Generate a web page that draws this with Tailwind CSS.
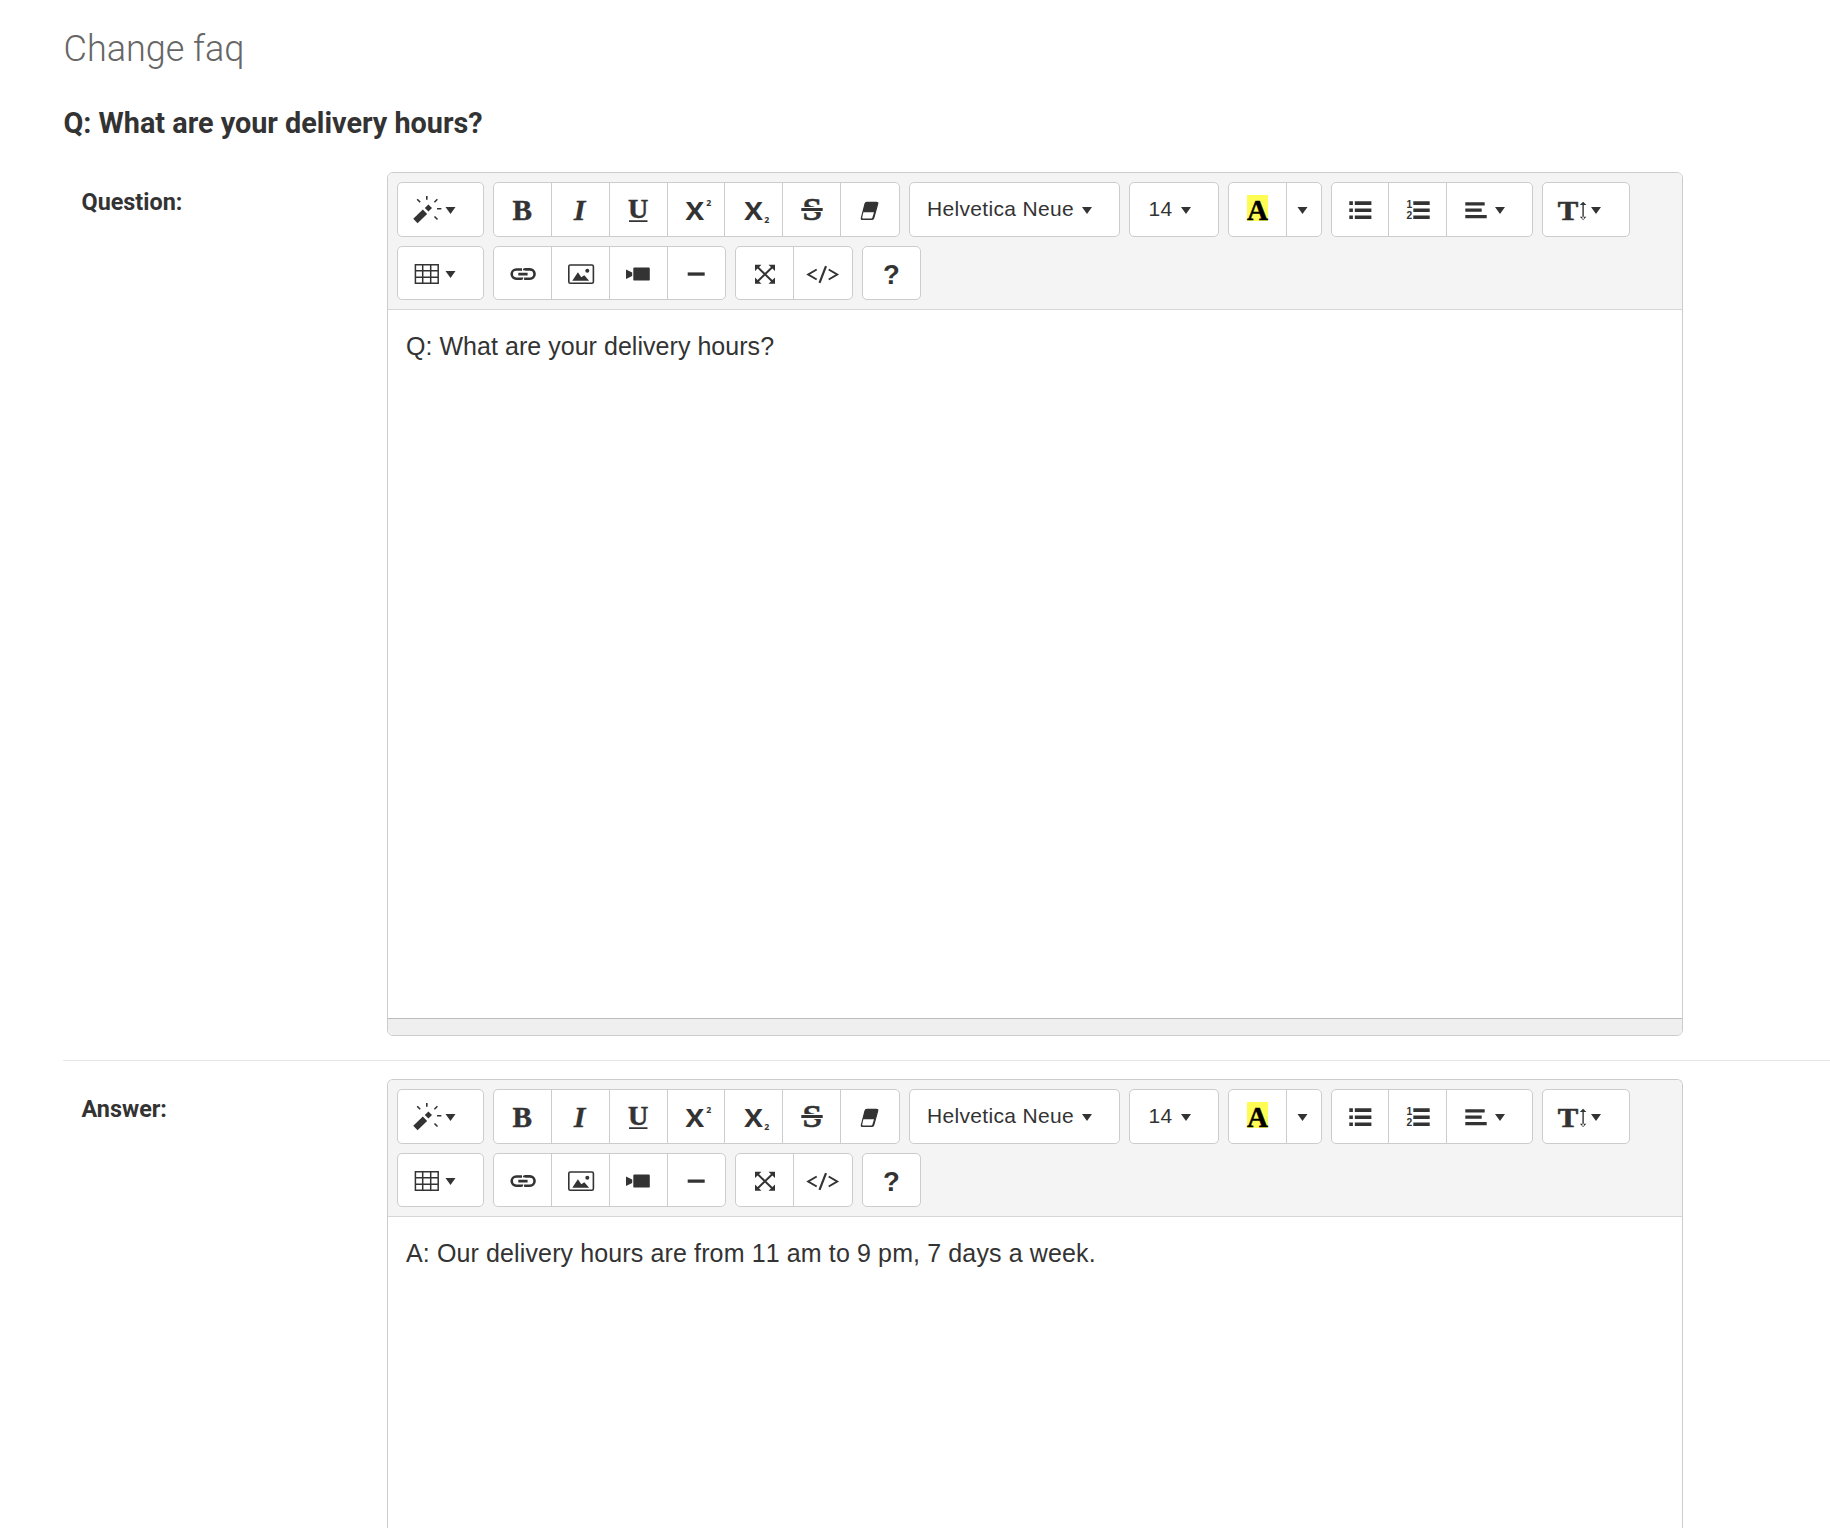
<!DOCTYPE html>
<html lang="en">
<head>
<meta charset="utf-8">
<title>Change faq</title>
<script src="https://cdn.jsdelivr.net/npm/@tailwindcss/browser@4"></script>
</head>
<body class="bg-white text-[#333] overflow-hidden h-[1528px] font-['Roboto',sans-serif]">
<template id="toolbar">
  <div class="flex h-[137px] flex-col gap-[9px] border-b border-[#d6d6d6] bg-[#f4f4f4] px-[9px] pt-[9px]">
    <div class="flex h-[55px] gap-[9px]">
      <div class="flex w-[87px] rounded-[5px] border border-[#ccc] bg-white">
        <svg class="h-[53px] w-[85px]" viewBox="398 183 85 53" fill="#333" stroke="#333" stroke-width="0"><path d="M415.4 221L425 211.8" stroke-width="6.2"/><path d="M428.4 204.4l3.6 3.6-3.6 3.6-3.6-3.6z"/><path d="M426.8 196v3.8M417.2 199.2l3 3.1M437.4 199.3l-3 3M437 208.8h4.4M434.5 216.5l3 3" stroke-width="1.6"/><path d="M445.5 207h10l-5 7z"/></svg>
      </div>
      <div class="flex w-[407px] divide-x divide-[#ccc] rounded-[5px] border border-[#ccc] bg-white">
        <svg class="h-[53px] w-[58px]" viewBox="494 183 57 53" fill="#333"><text x="512.5" y="219.7" font-family="Liberation Serif" font-weight="bold" font-size="30" stroke="#333" stroke-width=".5" textLength="19.5" lengthAdjust="spacingAndGlyphs">B</text></svg>
        <svg class="h-[53px] w-[58px]" viewBox="552 183 57 53" fill="#333"><text x="573.8" y="219.7" font-family="Liberation Serif" font-weight="bold" font-style="italic" font-size="30" stroke="#333" stroke-width=".3">I</text></svg>
        <svg class="h-[53px] w-[58px]" viewBox="610 183 57 53" fill="#333"><text x="628" y="218.3" font-family="Liberation Serif" font-weight="bold" font-size="26.5" stroke="#333" stroke-width=".5" textLength="20.3" lengthAdjust="spacingAndGlyphs">U</text><path d="M629 220.2h18.5v1.7h-18.5z"/></svg>
        <svg class="h-[53px] w-[57px]" viewBox="668 183 56 53" fill="#333"><text x="685.5" y="220" font-family="Open Sans" font-weight="bold" font-size="25.6" textLength="18.6" lengthAdjust="spacingAndGlyphs">X</text><text x="706.2" y="206" font-family="Open Sans" font-weight="bold" font-size="8.8">2</text></svg>
        <svg class="h-[53px] w-[58px]" viewBox="725 183 57 53" fill="#333"><text x="744.2" y="220" font-family="Open Sans" font-weight="bold" font-size="25.6" textLength="18.6" lengthAdjust="spacingAndGlyphs">X</text><text x="764.3" y="222.7" font-family="Open Sans" font-weight="bold" font-size="8.8">2</text></svg>
        <svg class="h-[53px] w-[58px]" viewBox="783 183 57 53" fill="#333"><text x="802.5" y="220.3" font-family="Liberation Serif" font-weight="bold" font-size="30.5" stroke="#333" stroke-width=".5" textLength="19.5" lengthAdjust="spacingAndGlyphs">S</text><path d="M801.3 207.1h21.4v4.8h-21.4z" fill="#fff"/><path d="M801.3 208h21.4v3h-21.4z"/></svg>
        <svg class="h-[53px] w-[58px]" viewBox="841 183 58 53" fill="#333"><path d="M866.8 202.3h9.8q1.5 0 1.1 1.5l-3.9 14.1q-.4 1.5-1.9 1.5h-9.4q-1.5 0-1.1-1.5l3.6-14.1q.4-1.5 1.8-1.5z" stroke="#333" stroke-width="1.2"/><path d="M863.4 212.2h10.6l-1.6 5.2q-.3 1-1.2 1h-8.2q-1 0-.8-1z" fill="#fff"/></svg>
      </div>
      <div class="flex w-[211px] items-center rounded-[5px] border border-[#ccc] bg-white font-['Liberation_Sans',sans-serif] text-[21px]"><span class="ml-[17px] w-[154.5px] pb-[1px] tracking-[0.32px] whitespace-nowrap">Helvetica Neue</span><svg class="mt-[2px] h-[7px] w-[10px]" viewBox="0 0 10 7" fill="#333"><path d="M0 0h10L5 7z"/></svg></div>
      <div class="flex w-[90px] items-center rounded-[5px] border border-[#ccc] bg-white font-['Liberation_Sans',sans-serif] text-[21px]"><span class="ml-[18.5px] w-[32px] pb-[1px] tracking-[0.3px]">14</span><svg class="mt-[2px] h-[7px] w-[10px]" viewBox="0 0 10 7" fill="#333"><path d="M0 0h10L5 7z"/></svg></div>
      <div class="flex w-[94px] divide-x divide-[#ccc] rounded-[5px] border border-[#ccc] bg-white">
        <svg class="h-[53px] w-[58px]" viewBox="1229 183 57 53"><path d="M1247 195h21v26h-21z" fill="#fffd54"/><text x="1247" y="220" font-family="Liberation Serif" font-weight="bold" font-size="30" stroke="#000" stroke-width=".5" textLength="21" lengthAdjust="spacingAndGlyphs">A</text></svg>
        <svg class="h-[53px] w-[34px]" viewBox="1287 183 34 53" fill="#333"><path d="M1297.5 207h10l-5 7z"/></svg>
      </div>
      <div class="flex w-[202px] divide-x divide-[#ccc] rounded-[5px] border border-[#ccc] bg-white">
        <svg class="h-[53px] w-[57px]" viewBox="1332 183 56 53" fill="#333"><path d="M1349.3 201.3h3.6v3.6h-3.6zM1354.8 201.3h16.6v3.6h-16.6zM1349.3 208.4h3.6v3.6h-3.6zM1354.8 208.4h16.6v3.6h-16.6zM1349.3 215.5h3.6v3.6h-3.6zM1354.8 215.5h16.6v3.6h-16.6z"/></svg>
        <svg class="h-[53px] w-[58px]" viewBox="1389 183 57 53" fill="#333"><path d="M1413.3 201.3h16.4v3.6h-16.4zM1413.3 208.4h16.4v3.6h-16.4zM1413.3 215.5h16.4v3.6h-16.4z"/><text x="1406.5" y="208.3" font-family="Liberation Sans" font-size="10.3" font-weight="bold">1</text><text x="1406.5" y="219.2" font-family="Liberation Sans" font-size="10.3" font-weight="bold">2</text></svg>
        <svg class="h-[53px] w-[85px]" viewBox="1447 183 85 53" fill="#333"><path d="M1465.3 202.2h19.4v3.2h-19.4zM1465.3 208.5h16.4v3.2h-16.4zM1465.3 215h21.4v3.2h-21.4zM1495 207h10l-5 7z"/></svg>
      </div>
      <div class="flex w-[88px] rounded-[5px] border border-[#ccc] bg-white">
        <svg class="h-[53px] w-[86px]" viewBox="1543 183 86 53" fill="#333"><text x="1557.8" y="219.8" font-family="Liberation Serif" font-weight="bold" font-size="27.5" stroke="#333" stroke-width=".6" textLength="20.5" lengthAdjust="spacingAndGlyphs">T</text><path d="M1582.4 203h1.4v16h-1.4zM1583.1 201.7l3.3 3.2h-6.6zM1583.1 220l3.3-3.2h-6.6zM1591 207h10l-5 7z"/></svg>
      </div>
    </div>
    <div class="flex h-[54px] gap-[9px]">
      <div class="flex w-[87px] rounded-[5px] border border-[#ccc] bg-white">
        <svg class="h-[52px] w-[85px]" viewBox="398 247 85 52" fill="none" stroke="#333"><path d="M415.4 264.8h22.8v18.4h-22.8zM422.7 265v18M430.7 265v18M415 270.8h23M415 277.2h23" stroke-width="1.5"/><path d="M445.5 271h10l-5 7z" fill="#333" stroke="none"/></svg>
      </div>
      <div class="flex w-[233px] divide-x divide-[#ccc] rounded-[5px] border border-[#ccc] bg-white">
        <svg class="h-[52px] w-[58px]" viewBox="494 247 57 52" fill="none" stroke="#333" stroke-width="2.6"><path d="M522 269.5h-5.7a4.6 4.6 0 0 0 0 9.2h4.8q1 0 1-1.2M524 270.4q.1-1 1.1-1h4.8a4.6 4.6 0 0 1 0 9.3h-5.8M518.3 274.1h9.3"/></svg>
        <svg class="h-[52px] w-[58px]" viewBox="552 247 57 52" fill="#333"><rect x="568.8" y="265" width="24.6" height="18.2" rx="1.5" fill="none" stroke="#333" stroke-width="1.6"/><path d="M572.3 280.8l5.6-8.6 3.4 5 3-2 4.8 5.6z"/><circle cx="587.3" cy="270.8" r="2"/></svg>
        <svg class="h-[52px] w-[58px]" viewBox="610 247 57 52" fill="#333"><rect x="633.3" y="267.6" width="16.5" height="13" rx="1.2"/><path d="M626 269.5l6.2 3v3.4l-6.2 3z"/></svg>
        <svg class="h-[52px] w-[57px]" viewBox="668 247 57 52" fill="#333"><path d="M687.7 272.4h17v3.3h-17z"/></svg>
      </div>
      <div class="flex w-[118px] divide-x divide-[#ccc] rounded-[5px] border border-[#ccc] bg-white">
        <svg class="h-[52px] w-[58px]" viewBox="736 247 57 52" fill="#333"><path d="M757 266.5l16 15.5M773 266.5l-16 15.5" stroke="#333" stroke-width="2"/><path d="M755 264.7h6.5l-6.5 6.3zM775 264.7h-6.5l6.5 6.3zM755 283.7h6.5l-6.5-6.3zM775 283.7h-6.5l6.5-6.3z"/></svg>
        <svg class="h-[52px] w-[58px]" viewBox="794 247 58 52" fill="none" stroke="#333" stroke-width="2"><path d="M816.7 269.5l-8.5 5 8.5 5M828.7 269.5l8.5 5-8.5 5"/><path d="M819.5 282.8l6.5-16.6" stroke-width="2.2"/></svg>
      </div>
      <div class="flex w-[59px] rounded-[5px] border border-[#ccc] bg-white">
        <svg class="h-[52px] w-[57px]" viewBox="863 247 57 52" fill="#333"><text x="882.9" y="283.7" font-family="Liberation Sans" font-weight="bold" font-size="27.5">?</text></svg>
      </div>
    </div>
  </div>
</template>
<main class="pl-[63px]">
  <h1 class="flex h-[97px] items-center pl-[0.5px] text-[36px] font-light text-[#666]">Change faq</h1>
  <h2 class="flex h-[51px] items-center pt-[3px] pl-[0.5px] text-[28.8px] font-bold">Q: What are your delivery hours?</h2>
  <section class="flex h-[913px] items-start border-b border-[#e6e6e6] pt-[24px] pl-[18px]">
    <div class="w-[306px] pt-[15px] pl-[0.5px] text-[23.4px] leading-[30px] font-bold">Question:</div>
    <div class="flex h-[864px] w-[1296px] flex-col overflow-hidden rounded-[6px] border border-[#ccc]">
      <div data-toolbar></div>
      <div class="flex-1 px-[18px] pt-[20px] font-['Liberation_Sans',sans-serif] text-[25px] leading-[32px] tracking-[0.04px]">Q: What are your delivery hours?</div>
      <div class="h-[17px] border-t border-[#bbb] bg-[#efefef]"></div>
    </div>
  </section>
  <section class="flex h-[467px] items-start overflow-hidden pt-[18px] pl-[18px]">
    <div class="w-[306px] pt-[15px] pl-[0.5px] text-[23.4px] leading-[30px] font-bold">Answer:</div>
    <div class="flex h-[449px] w-[1296px] flex-col overflow-hidden rounded-t-[6px] border border-b-0 border-[#ccc]">
      <div data-toolbar></div>
      <div class="flex-1 px-[18px] pt-[20px] font-['Liberation_Sans',sans-serif] text-[25px] leading-[32px] tracking-[0.125px] [font-kerning:none]">A: Our delivery hours are from 11 am to 9 pm, 7 days a week.</div>
    </div>
  </section>
</main>
<script>
  const toolbar = document.getElementById('toolbar');
  document.querySelectorAll('[data-toolbar]').forEach(el => el.replaceWith(toolbar.content.cloneNode(true)));
</script>
</body>
</html>
